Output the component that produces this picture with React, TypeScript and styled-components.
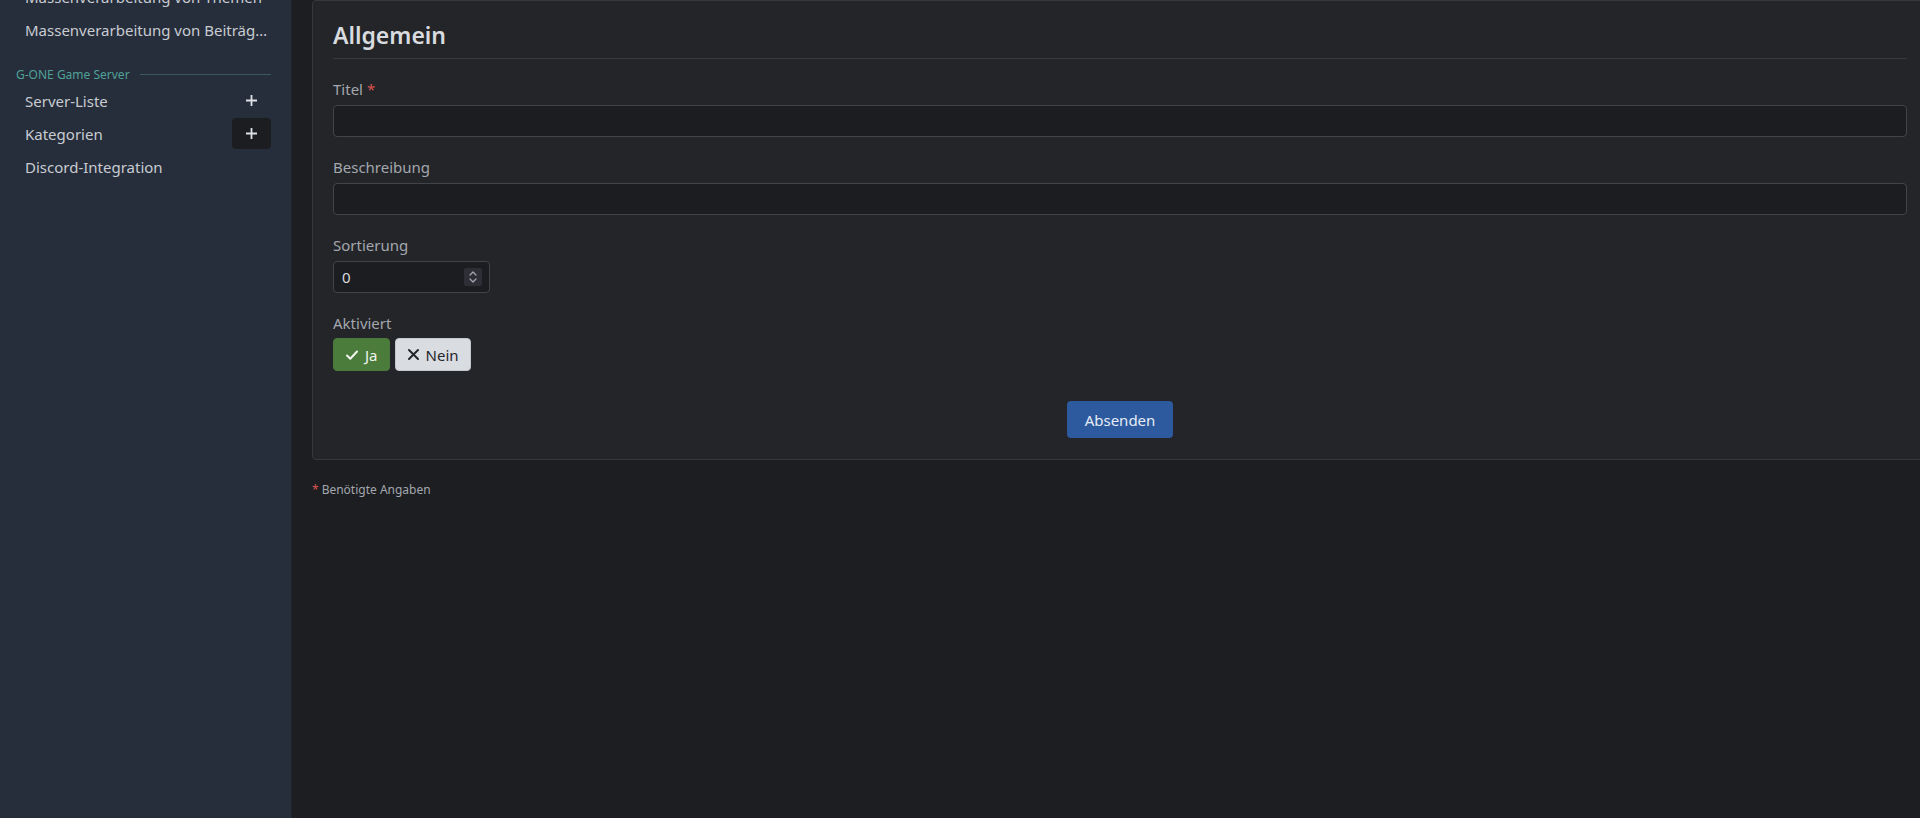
import styled, { createGlobalStyle } from "styled-components";

const GlobalStyle = createGlobalStyle`
  html, body {
    margin: 0;
    padding: 0;
    background: #1d1e21;
    font-family: "Noto Sans", "Open Sans", sans-serif;
    overflow: hidden;
  }
  * {
    box-sizing: border-box;
  }
`;

const Layout = styled.div`
  display: grid;
  grid-template-columns: 292px 1fr;
  height: 100vh;
  overflow: hidden;
`;

const Sidebar = styled.aside`
  background: #272e3b;
  border-right: 1px solid #20252f;
  padding: 0 20px 0 16px;
  overflow: hidden;
`;

const MenuList = styled.div`
  margin-top: -20px;
  display: flex;
  flex-direction: column;
`;

const MenuRow = styled.div`
  display: flex;
  align-items: center;
  justify-content: space-between;
  height: 33px;
  padding-left: 9px;
`;

const MenuLink = styled.a`
  flex: 1;
  min-width: 0;
  padding-right: 3px;
  color: #c8ccd2;
  font-size: 15px;
  text-decoration: none;
  white-space: nowrap;
  overflow: hidden;
  text-overflow: ellipsis;
`;

const SectionTitle = styled.div`
  display: flex;
  align-items: center;
  gap: 10px;
  padding: 20px 0 1px;
  line-height: 17px;
  font-size: 12px;
  color: #4fa198;

  &::after {
    content: "";
    flex: 1;
    height: 1px;
    background: #3b5a5c;
  }
`;

const AddButton = styled.button<{ $active?: boolean }>`
  width: 39px;
  height: 31px;
  border: 0;
  border-radius: 4px;
  display: flex;
  align-items: center;
  justify-content: center;
  background: ${(p) => (p.$active ? "#1c1d21" : "transparent")};
  color: #dde0e4;
  padding: 0;
  cursor: pointer;
`;

const Main = styled.main`
  padding-left: 20px;
  overflow: hidden;
  color: #c8ccd2;
`;

const Panel = styled.section`
  margin-right: -8px;
  background: #242529;
  border: 1px solid #35373b;
  border-radius: 4px;
  padding: 20px 20px 21px;
`;

const PanelTitle = styled.h2`
  margin: 0 0 2px;
  padding-bottom: 8px;
  border-bottom: 1px solid #37393e;
  font-size: 23px;
  line-height: 29px;
  font-weight: 600;
  color: #d8dbdf;
`;

const Field = styled.div`
  display: flex;
  flex-direction: column;
  gap: 4px;
  margin-top: 18px;
`;

const Label = styled.label`
  font-size: 15px;
  line-height: 24px;
  color: #a3a7ae;
`;

const Required = styled.span`
  color: #d9534f;
  margin-left: 4px;
`;

const TextInput = styled.input`
  width: 100%;
  height: 32px;
  background: #1c1d20;
  border: 1px solid #42444a;
  border-radius: 4px;
  color: #d8dbdf;
  font: inherit;
  font-size: 15px;
  padding: 0 8px;
  outline: none;
`;

const NumberBox = styled.div`
  width: 157px;
  height: 32px;
  display: flex;
  align-items: center;
  background: #1c1d20;
  border: 1px solid #42444a;
  border-radius: 4px;
  padding: 0 7px 0 8px;
`;

const NumberInput = styled.input`
  flex: 1;
  min-width: 0;
  background: transparent;
  border: 0;
  outline: none;
  color: #d8dbdf;
  font: inherit;
  font-size: 15px;
  padding: 0;
`;

const Spinner = styled.span`
  width: 18px;
  height: 18px;
  display: flex;
  align-items: center;
  justify-content: center;
  background: #2e2f36;
  border-radius: 2px;
  color: #a6a9b0;
`;

const ToggleGroup = styled.div`
  display: flex;
  gap: 5px;
  margin-top: -1px;
`;

const ToggleButton = styled.button<{ $on?: boolean }>`
  height: 33px;
  display: flex;
  align-items: center;
  gap: 6px;
  padding: 0 11px;
  border: 1px solid ${(p) => (p.$on ? "#4a7a3a" : "#c4c8cd")};
  border-radius: 4px;
  background: ${(p) => (p.$on ? "#4b7c3b" : "#d9dce0")};
  color: ${(p) => (p.$on ? "#f1f4ef" : "#25272b")};
  font: inherit;
  font-size: 15px;
  cursor: pointer;
`;

const FormFooter = styled.div`
  display: flex;
  justify-content: center;
  margin-top: 30px;
`;

const SubmitButton = styled.button`
  height: 37px;
  padding: 0 18px;
  border: 0;
  border-radius: 4px;
  background: #2d5a9e;
  color: #e6ecf5;
  font: inherit;
  font-size: 15px;
  cursor: pointer;
`;

const Note = styled.p`
  margin: 22px 0 0;
  font-size: 12px;
  line-height: 16px;
  color: #a3a7ae;
`;

const NoteStar = styled.span`
  color: #d9534f;
  margin-right: 3px;
`;

function PlusIcon() {
  return (
    <svg width="13" height="13" viewBox="0 0 13 13" fill="none">
      <path d="M6.5 1v11M1 6.5h11" stroke="currentColor" strokeWidth="1.8" />
    </svg>
  );
}

function CheckIcon() {
  return (
    <svg width="14" height="14" viewBox="0 0 14 14" fill="none">
      <path
        d="M2 7.5l3.3 3.3L12 3.5"
        stroke="currentColor"
        strokeWidth="2"
        strokeLinecap="round"
        strokeLinejoin="round"
      />
    </svg>
  );
}

function CrossIcon() {
  return (
    <svg width="13" height="13" viewBox="0 0 13 13" fill="none">
      <path
        d="M2 2l9 9M11 2l-9 9"
        stroke="currentColor"
        strokeWidth="2"
        strokeLinecap="round"
      />
    </svg>
  );
}

function SpinIcon() {
  return (
    <svg width="8" height="12" viewBox="0 0 8 12" fill="none">
      <path
        d="M1 4l3-3 3 3M1 8l3 3 3-3"
        stroke="currentColor"
        strokeWidth="1.2"
        strokeLinecap="round"
        strokeLinejoin="round"
      />
    </svg>
  );
}

const menu = [
  { label: "Massenverarbeitung von Themen" },
  { label: "Massenverarbeitung von Beiträgen" },
];

const serverMenu = [
  { label: "Server-Liste", add: true },
  { label: "Kategorien", add: true, active: true },
  { label: "Discord-Integration" },
];

export default function App() {
  return (
    <>
      <GlobalStyle />
      <Layout>
        <Sidebar>
          <MenuList>
            {menu.map((item) => (
              <MenuRow key={item.label}>
                <MenuLink href="#">{item.label}</MenuLink>
              </MenuRow>
            ))}
            <SectionTitle>G-ONE Game Server</SectionTitle>
            {serverMenu.map((item) => (
              <MenuRow key={item.label}>
                <MenuLink href="#">{item.label}</MenuLink>
                {item.add && (
                  <AddButton $active={item.active}>
                    <PlusIcon />
                  </AddButton>
                )}
              </MenuRow>
            ))}
          </MenuList>
        </Sidebar>
        <Main>
          <Panel>
            <PanelTitle>Allgemein</PanelTitle>
            <Field>
              <Label>
                Titel<Required>*</Required>
              </Label>
              <TextInput type="text" />
            </Field>
            <Field>
              <Label>Beschreibung</Label>
              <TextInput type="text" />
            </Field>
            <Field>
              <Label>Sortierung</Label>
              <NumberBox>
                <NumberInput type="text" defaultValue="0" />
                <Spinner>
                  <SpinIcon />
                </Spinner>
              </NumberBox>
            </Field>
            <Field>
              <Label>Aktiviert</Label>
              <ToggleGroup>
                <ToggleButton $on>
                  <CheckIcon />
                  Ja
                </ToggleButton>
                <ToggleButton>
                  <CrossIcon />
                  Nein
                </ToggleButton>
              </ToggleGroup>
            </Field>
            <FormFooter>
              <SubmitButton>Absenden</SubmitButton>
            </FormFooter>
          </Panel>
          <Note>
            <NoteStar>*</NoteStar>
            Benötigte Angaben
          </Note>
        </Main>
      </Layout>
    </>
  );
}
